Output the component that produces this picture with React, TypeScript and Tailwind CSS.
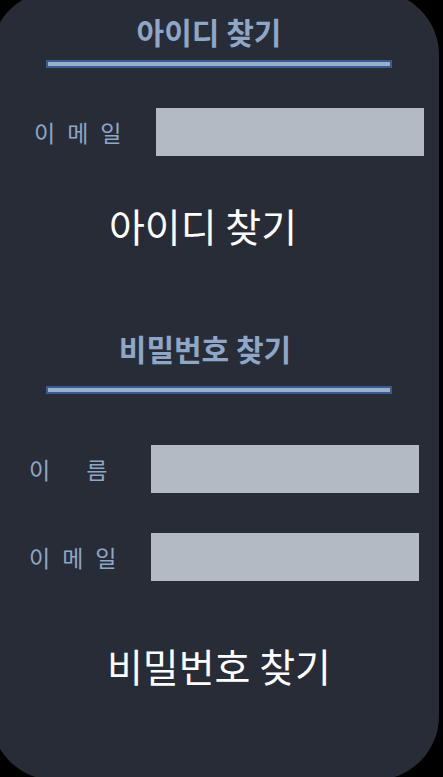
import React from "react";

const font = { fontFamily: '"Noto Sans CJK KR", "Noto Sans", sans-serif' };

function Label({ parts, gap, ml }: { parts: string[]; gap: string; ml: string }) {
  return (
    <div className={`flex ${gap} ${ml} text-[23px] leading-[30px] text-[#8ea6c8]`}>
      {parts.map((p, i) => (
        <span key={i}>{p}</span>
      ))}
    </div>
  );
}

export default function App() {
  return (
    <div className="w-[443px] h-[777px] bg-black overflow-hidden" style={font}>
      <div className="-ml-[9px] -mt-[9px] w-[448px] h-[789px] rounded-[64px] bg-[#282c37] flex flex-col">
        <div className="mt-[24px] h-[32px] leading-[32px] text-center pr-[12px] text-[30px] font-bold text-[#8ea6c8]">아이디 찾기</div>
        <div className="mt-[13px] ml-[55px] w-[346px] h-[8px] border-2 border-[#3b5a92] bg-[#9aaed0]" />
        <div className="mt-[40px] flex items-center h-[48px]">
          <Label parts={["이", "메", "일"]} gap="gap-[12px]" ml="ml-[43px]" />
          <div className="ml-auto mr-[15px] w-[268px] h-[48px] bg-[#b4bac3]" />
        </div>
        <div className="mt-[47px] h-[44px] leading-[44px] text-center pr-[24px] text-[39px] text-white">아이디 찾기</div>
        <div className="mt-[85px] h-[32px] leading-[32px] text-center pr-[20px] text-[30px] font-bold text-[#8ea6c8]">비밀번호 찾기</div>
        <div className="mt-[22px] ml-[55px] w-[346px] h-[8px] border-2 border-[#3b5a92] bg-[#9aaed0]" />
        <div className="mt-[51px] flex items-center h-[48px]">
          <Label parts={["이", "름"]} gap="gap-[36px]" ml="ml-[38px]" />
          <div className="ml-auto mr-[20px] w-[268px] h-[48px] bg-[#b4bac3]" />
        </div>
        <div className="mt-[40px] flex items-center h-[48px]">
          <Label parts={["이", "메", "일"]} gap="gap-[12px]" ml="ml-[38px]" />
          <div className="ml-auto mr-[20px] w-[268px] h-[48px] bg-[#b4bac3]" />
        </div>
        <div className="mt-[62px] h-[44px] leading-[44px] text-center pl-[8px] text-[39px] text-white">비밀번호 찾기</div>
      </div>
    </div>
  );
}
